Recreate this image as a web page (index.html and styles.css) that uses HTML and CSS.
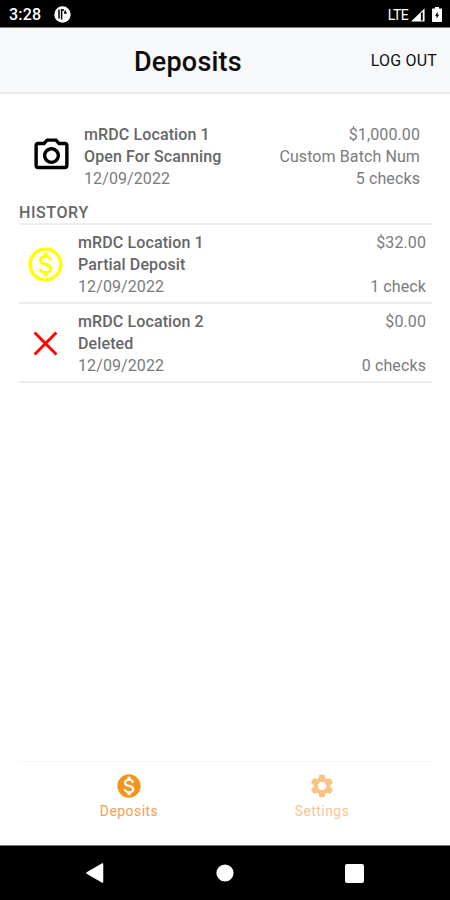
FILE: index.html
```html
<!DOCTYPE html>
<html lang="en">
<head>
  <meta charset="UTF-8" />
  <title>Deposits</title>
  <meta name="viewport" content="width=device-width, initial-scale=1.0" />
  <link rel="stylesheet" href="styles.css">
</head>
<body>

  <!-- Status bar -->
  <div class="status-bar">
    <span class="clock">3:28</span>
    <svg class="status-app" width="17" height="17" viewBox="0 0 17 17">
      <circle cx="8.5" cy="8.5" r="8.2" fill="#fff"/>
      <path d="M5 3.500v9" fill="none" stroke="#000" stroke-width="1.500"/>
      <path d="M7.600 3v10.500M8 4h2M11.200 4.500v3.300M10 7h2.800" fill="none" stroke="#000" stroke-width="1.500"/>
    </svg>
    <span class="network">LTE</span>
    <svg class="signal" width="14" height="14" viewBox="0 0 15 14">
      <path d="M14.500 0v14H0z" fill="#fff"/>
      <path d="M10.600 5.200v7.600h2V3.400z" fill="#000"/>
    </svg>
    <svg class="battery" width="10" height="15" viewBox="0 0 10 15">
      <path d="M3 0h4v1.600h2c.6 0 1 .4 1 1V14c0 .6-.4 1-1 1H1c-.6 0-1-.4-1-1V2.600c0-.6.4-1 1-1h2z" fill="#fff"/>
      <path d="M5.600 4.800 3 8.800h1.600v2.800L7.200 7.800H5.600z" fill="#000"/>
    </svg>
  </div>

  <header>
    <h1>Deposits</h1>
    <a href="#" class="logout">LOG OUT</a>
  </header>

  <main>
    <!-- Open batch -->
    <div class="deposit open">
      <svg class="icon" viewBox="0 0 24 24" fill="#000">
        <path d="M14.120 4l1.830 2H20v12H4V6h4.050l1.830-2h4.240M15 2H9L7.170 4H4c-1.100 0-2 .9-2 2v12c0 1.100.9 2 2 2h16c1.100 0 2-.9 2-2V6c0-1.100-.9-2-2-2h-3.170L15 2zm-3 7c1.650 0 3 1.350 3 3s-1.350 3-3 3-3-1.350-3-3 1.350-3 3-3m0-2c-2.760 0-5 2.240-5 5s2.240 5 5 5 5-2.240 5-5-2.240-5-5-5z"/>
      </svg>
      <div class="info">
        <strong>mRDC Location 1</strong>
        <strong>Open For Scanning</strong>
        <span>12/09/2022</span>
      </div>
      <div class="totals">
        <span>$1,000.00</span>
        <span>Custom Batch Num</span>
        <span>5 checks</span>
      </div>
    </div>

    <h2>HISTORY</h2>

    <div class="deposit">
      <svg class="icon" viewBox="0 0 24 24" fill="#ff0">
        <path d="M12 2C6.480 2 2 6.480 2 12s4.480 10 10 10 10-4.480 10-10S17.520 2 12 2zm0 18c-4.410 0-8-3.590-8-8s3.590-8 8-8 8 3.590 8 8-3.590 8-8 8zm.31-8.860c-1.770-.45-2.340-.94-2.340-1.670 0-.84.79-1.430 2.100-1.430 1.380 0 1.900.66 1.940 1.640h1.710c-.05-1.340-.87-2.570-2.490-2.970V5H10.900v1.690c-1.510.32-2.720 1.300-2.720 2.810 0 1.790 1.490 2.690 3.660 3.210 1.950.46 2.340 1.150 2.340 1.870 0 .53-.39 1.390-2.100 1.390-1.600 0-2.230-.72-2.320-1.640H8.040c.1 1.700 1.360 2.660 2.860 2.970V19h2.340v-1.670c1.520-.29 2.720-1.160 2.730-2.770-.01-2.200-1.900-2.960-3.660-3.420z"/>
      </svg>
      <div class="info">
        <strong>mRDC Location 1</strong>
        <strong>Partial Deposit</strong>
        <span>12/09/2022</span>
      </div>
      <div class="totals">
        <span>$32.00</span>
        <span>1 check</span>
      </div>
    </div>

    <div class="deposit">
      <svg class="icon" viewBox="0 0 24 24">
        <path d="M5.600 5.600 18.400 18.400M18.400 5.600 5.600 18.400" stroke="#f00" stroke-width="1.700"/>
      </svg>
      <div class="info">
        <strong>mRDC Location 2</strong>
        <strong>Deleted</strong>
        <span>12/09/2022</span>
      </div>
      <div class="totals">
        <span>$0.00</span>
        <span>0 checks</span>
      </div>
    </div>
  </main>

  <!-- Tabs -->
  <nav class="tabs">
    <a href="#" class="tab active">
      <svg viewBox="0 0 24 24">
        <path d="M12 2C6.480 2 2 6.480 2 12s4.480 10 10 10 10-4.480 10-10S17.520 2 12 2zm1.410 16.090V20h-2.670v-1.930c-1.710-.36-3.160-1.460-3.270-3.400h1.960c.1 1.050.82 1.870 2.650 1.870 1.960 0 2.400-.98 2.400-1.590 0-.83-.44-1.610-2.670-2.140-2.480-.6-4.180-1.620-4.180-3.670 0-1.720 1.390-2.840 3.110-3.210V4h2.670v1.950c1.860.45 2.790 1.860 2.850 3.390H14.300c-.05-1.110-.64-1.870-2.220-1.870-1.500 0-2.400.68-2.400 1.640 0 .84.65 1.390 2.670 1.910s4.180 1.390 4.180 3.910c-.01 1.830-1.380 2.830-3.120 3.160z"/>
      </svg>
      <span>Deposits</span>
    </a>
    <a href="#" class="tab">
      <svg viewBox="0 0 24 24">
        <path d="M19.140 12.940c.04-.3.060-.61.060-.94 0-.32-.02-.64-.07-.94l2.030-1.580c.18-.14.23-.41.12-.61l-1.920-3.320c-.12-.22-.37-.29-.59-.22l-2.390.96c-.5-.38-1.030-.7-1.620-.94l-.36-2.540c-.04-.24-.24-.41-.48-.41h-3.840c-.24 0-.43.17-.47.41l-.36 2.540c-.59.24-1.130.57-1.620.94l-2.390-.96c-.22-.08-.47 0-.59.22L2.740 8.870c-.12.21-.08.47.12.61l2.030 1.580c-.05.3-.09.63-.09.94s.02.64.07.94l-2.030 1.580c-.18.14-.23.41-.12.61l1.920 3.320c.12.22.37.29.59.22l2.390-.96c.5.38 1.030.7 1.620.94l.36 2.540c.05.24.24.41.48.41h3.840c.24 0 .44-.17.47-.41l.36-2.540c.59-.24 1.130-.56 1.620-.94l2.390.96c.22.08.47 0 .59-.22l1.920-3.320c.12-.22.07-.47-.12-.61l-2.010-1.580zM12 15.600c-1.980 0-3.600-1.620-3.600-3.600s1.620-3.600 3.600-3.600 3.600 1.620 3.600 3.600-1.620 3.600-3.600 3.600z"/>
      </svg>
      <span>Settings</span>
    </a>
  </nav>

  <!-- Android buttons -->
  <div class="nav-bar">
    <svg width="18" height="20" viewBox="0 0 18 20">
      <path d="M16.500 1v18L1 10z" fill="#fff" stroke="#fff" stroke-width="1.500" stroke-linejoin="round"/>
    </svg>
    <svg width="18" height="18" viewBox="0 0 18 18">
      <circle cx="9" cy="9" r="8.600" fill="#fff"/>
    </svg>
    <svg width="19" height="19" viewBox="0 0 19 19">
      <rect width="19" height="19" rx="2" fill="#fff"/>
    </svg>
  </div>

</body>
</html>
```
FILE: styles.css
```css
* { box-sizing: border-box; margin: 0; padding: 0; }

body {
  display: flex;
  flex-direction: column;
  height: 900px;
  font-family: Roboto, sans-serif;
  background: #fff;
  color: #7b7b7b;
  overflow: hidden;
}

a { text-decoration: none; }
svg { display: block; flex: none; }

/* Status bar */
.status-bar {
  display: flex;
  align-items: center;
  height: 28px;
  padding: 2px 8px 0 9px;
  background: #000;
  color: #fff;
  border-bottom: 1px solid #777;
}
.clock {
  width: 45px;
  font-size: 16px;
  font-weight: 500;
  letter-spacing: 0.2px;
}
.network {
  margin-left: auto;
  font-size: 14px;
  letter-spacing: -0.6px;
}
.signal { margin-left: 3px; }
.battery { margin-left: 7px; }

/* Header */
header {
  display: flex;
  align-items: center;
  justify-content: space-between;
  height: 66px;
  padding: 0 13px 0 134px;
  background: #f7f8fa;
  border-bottom: 2px solid #e9eaec;
}
header h1 {
  padding-top: 4px;
  font-size: 27px;
  font-weight: 500;
  letter-spacing: 0.2px;
  color: #0c0c0c;
}
.logout {
  font-size: 16px;
  letter-spacing: 0.2px;
  color: #111;
}

/* Deposits */
main {
  flex: 1;
  padding: 23px 18px 0 19px;
}
.deposit {
  display: flex;
  align-items: center;
  height: 79px;
  padding: 2px 6px 0 6px;
  border-bottom: 2px solid #ededed;
  font-size: 16px;
  line-height: 22px;
}
.deposit.open {
  padding: 0 12px;
  border-bottom: none;
}
.deposit.open .icon { margin-bottom: 3px; }
.icon {
  width: 41px;
  height: 41px;
}
.info {
  display: flex;
  flex-direction: column;
  margin-left: 12px;
  letter-spacing: 0.1px;
}
.info strong {
  font-weight: 500;
  letter-spacing: 0.12px;
  color: #666;
}
.totals {
  display: flex;
  flex-direction: column;
  justify-content: space-between;
  height: 66px;
  margin-left: auto;
  text-align: right;
  letter-spacing: 0.1px;
}

h2 {
  height: 29px;
  padding-top: 6px;
  border-bottom: 2px solid #ededed;
  font-size: 16px;
  font-weight: 500;
  line-height: 22px;
  letter-spacing: 0.6px;
  color: #666;
}

/* Tabs */
.tabs {
  display: flex;
  justify-content: center;
  height: 84px;
  margin: 0 18px;
  border-top: 1px solid #f7f7f7;
}
.tab {
  display: flex;
  flex-direction: column;
  align-items: center;
  width: 193px;
  padding-top: 10px;
  font-size: 14px;
  line-height: 20px;
  letter-spacing: 0.45px;
}
.tab svg {
  width: 28px;
  height: 28px;
  margin-bottom: 1px;
  fill: #f9c384;
}
.tab span {
  padding-left: 1px;
  color: #f9c692;
}
.tab.active svg { fill: #f3951c; }
.tab.active span { color: #f5a050; }

/* Android buttons */
.nav-bar {
  display: flex;
  align-items: center;
  justify-content: space-between;
  height: 55px;
  padding: 0 86px;
  background: #000;
  border-top: 1px solid #777;
}
```
